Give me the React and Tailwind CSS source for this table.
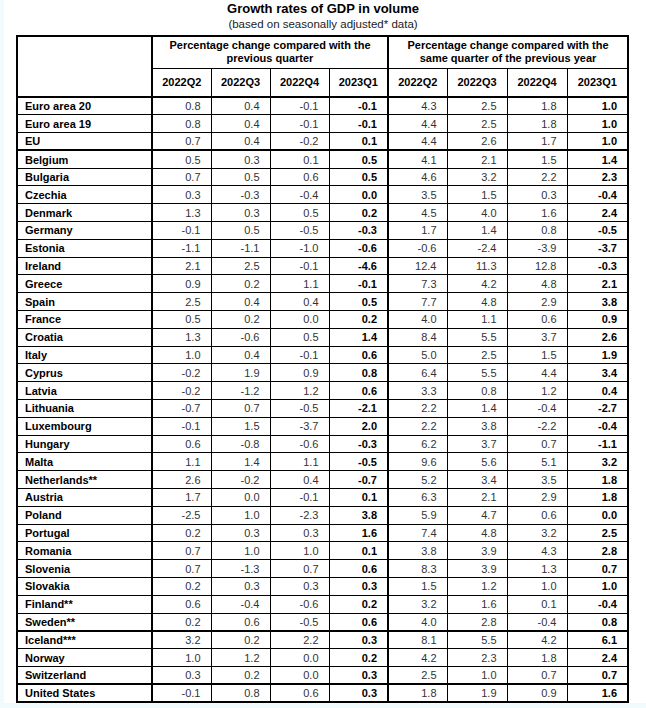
import React from "react";

const rows = [
  ["Euro area 20", ["0.8", "0.4", "-0.1", "-0.1"], ["4.3", "2.5", "1.8", "1.0"]],
  ["Euro area 19", ["0.8", "0.4", "-0.1", "-0.1"], ["4.4", "2.5", "1.8", "1.0"]],
  ["EU", ["0.7", "0.4", "-0.2", "0.1"], ["4.4", "2.6", "1.7", "1.0"], true],
  ["Belgium", ["0.5", "0.3", "0.1", "0.5"], ["4.1", "2.1", "1.5", "1.4"]],
  ["Bulgaria", ["0.7", "0.5", "0.6", "0.5"], ["4.6", "3.2", "2.2", "2.3"]],
  ["Czechia", ["0.3", "-0.3", "-0.4", "0.0"], ["3.5", "1.5", "0.3", "-0.4"]],
  ["Denmark", ["1.3", "0.3", "0.5", "0.2"], ["4.5", "4.0", "1.6", "2.4"]],
  ["Germany", ["-0.1", "0.5", "-0.5", "-0.3"], ["1.7", "1.4", "0.8", "-0.5"]],
  ["Estonia", ["-1.1", "-1.1", "-1.0", "-0.6"], ["-0.6", "-2.4", "-3.9", "-3.7"]],
  ["Ireland", ["2.1", "2.5", "-0.1", "-4.6"], ["12.4", "11.3", "12.8", "-0.3"]],
  ["Greece", ["0.9", "0.2", "1.1", "-0.1"], ["7.3", "4.2", "4.8", "2.1"]],
  ["Spain", ["2.5", "0.4", "0.4", "0.5"], ["7.7", "4.8", "2.9", "3.8"]],
  ["France", ["0.5", "0.2", "0.0", "0.2"], ["4.0", "1.1", "0.6", "0.9"]],
  ["Croatia", ["1.3", "-0.6", "0.5", "1.4"], ["8.4", "5.5", "3.7", "2.6"]],
  ["Italy", ["1.0", "0.4", "-0.1", "0.6"], ["5.0", "2.5", "1.5", "1.9"]],
  ["Cyprus", ["-0.2", "1.9", "0.9", "0.8"], ["6.4", "5.5", "4.4", "3.4"]],
  ["Latvia", ["-0.2", "-1.2", "1.2", "0.6"], ["3.3", "0.8", "1.2", "0.4"]],
  ["Lithuania", ["-0.7", "0.7", "-0.5", "-2.1"], ["2.2", "1.4", "-0.4", "-2.7"]],
  ["Luxembourg", ["-0.1", "1.5", "-3.7", "2.0"], ["2.2", "3.8", "-2.2", "-0.4"]],
  ["Hungary", ["0.6", "-0.8", "-0.6", "-0.3"], ["6.2", "3.7", "0.7", "-1.1"]],
  ["Malta", ["1.1", "1.4", "1.1", "-0.5"], ["9.6", "5.6", "5.1", "3.2"]],
  ["Netherlands**", ["2.6", "-0.2", "0.4", "-0.7"], ["5.2", "3.4", "3.5", "1.8"]],
  ["Austria", ["1.7", "0.0", "-0.1", "0.1"], ["6.3", "2.1", "2.9", "1.8"]],
  ["Poland", ["-2.5", "1.0", "-2.3", "3.8"], ["5.9", "4.7", "0.6", "0.0"]],
  ["Portugal", ["0.2", "0.3", "0.3", "1.6"], ["7.4", "4.8", "3.2", "2.5"]],
  ["Romania", ["0.7", "1.0", "1.0", "0.1"], ["3.8", "3.9", "4.3", "2.8"]],
  ["Slovenia", ["0.7", "-1.3", "0.7", "0.6"], ["8.3", "3.9", "1.3", "0.7"]],
  ["Slovakia", ["0.2", "0.3", "0.3", "0.3"], ["1.5", "1.2", "1.0", "1.0"]],
  ["Finland**", ["0.6", "-0.4", "-0.6", "0.2"], ["3.2", "1.6", "0.1", "-0.4"]],
  ["Sweden**", ["0.2", "0.6", "-0.5", "0.6"], ["4.0", "2.8", "-0.4", "0.8"], true],
  ["Iceland***", ["3.2", "0.2", "2.2", "0.3"], ["8.1", "5.5", "4.2", "6.1"]],
  ["Norway", ["1.0", "1.2", "0.0", "0.2"], ["4.2", "2.3", "1.8", "2.4"]],
  ["Switzerland", ["0.3", "0.2", "0.0", "0.3"], ["2.5", "1.0", "0.7", "0.7"], true],
  ["United States", ["-0.1", "0.8", "0.6", "0.3"], ["1.8", "1.9", "0.9", "1.6"]],
];

const quarters = ["2022Q2", "2022Q3", "2022Q4", "2023Q1"];

export default function App() {
  return (
    <div className="w-[646px] h-[708px] bg-[#f1fbfd] pl-[4px] pb-[5px] font-['Liberation_Sans',Arial,sans-serif]">
      <div className="h-full bg-white flex flex-col items-center pt-[1px]">
        {/* Title */}
        <div className="text-[13px] leading-[16px] font-bold text-black ml-[-4px]">
          Growth rates of GDP in volume
        </div>
        <div className="text-[11.5px] leading-[14px] text-[#222] ml-[-4px]">
          (based on seasonally adjusted* data)
        </div>

        <table className="mt-[4px] ml-[-5px] w-[611px] table-fixed border-collapse border-2 border-black text-[11px] leading-[12px]">
          <colgroup>
            <col className="w-[135px]" />
            <col className="w-[59px]" />
            <col className="w-[59px]" />
            <col className="w-[59px]" />
            <col className="w-[59px]" />
            <col className="w-[59px]" />
            <col className="w-[60px]" />
            <col className="w-[60px]" />
            <col className="w-[61px]" />
          </colgroup>
          <thead>
            <tr className="h-[32px]">
              <th rowSpan={2} className="border border-black border-r-2 border-b-2" />
              <th colSpan={4} className="border border-black border-r-2 px-2 text-center font-bold leading-[13px]">
                Percentage change compared with the
                <br />
                previous quarter
              </th>
              <th colSpan={4} className="border border-black px-2 text-center font-bold leading-[13px]">
                Percentage change compared with the
                <br />
                same quarter of the previous year
              </th>
            </tr>
            <tr className="h-[29px]">
              {quarters.map((q, i) => (
                <th
                  key={"a" + q}
                  className={`border border-black border-b-2 text-center font-bold ${i === 3 ? "border-r-2" : ""}`}
                >
                  {q}
                </th>
              ))}
              {quarters.map((q) => (
                <th key={"b" + q} className="border border-black border-b-2 text-center font-bold">
                  {q}
                </th>
              ))}
            </tr>
          </thead>
          <tbody>
            {rows.map(([name, qoq, yoy, thick]) => (
              <tr key={name} className="h-[17.8px]">
                <td
                  className={`border border-black border-r-2 pl-[7px] font-bold text-black whitespace-nowrap ${thick ? "border-b-2" : ""}`}
                >
                  {name}
                </td>
                {[...qoq, ...yoy].map((v, i) => (
                  <td
                    key={i}
                    className={[
                      "border border-black pr-[10px] text-right",
                      i === 3 || i === 7 ? "font-bold text-black" : "text-[#333]",
                      i === 3 ? "border-r-2" : "",
                      thick ? "border-b-2" : "",
                    ].join(" ")}
                  >
                    {v}
                  </td>
                ))}
              </tr>
            ))}
          </tbody>
        </table>
      </div>
    </div>
  );
}
